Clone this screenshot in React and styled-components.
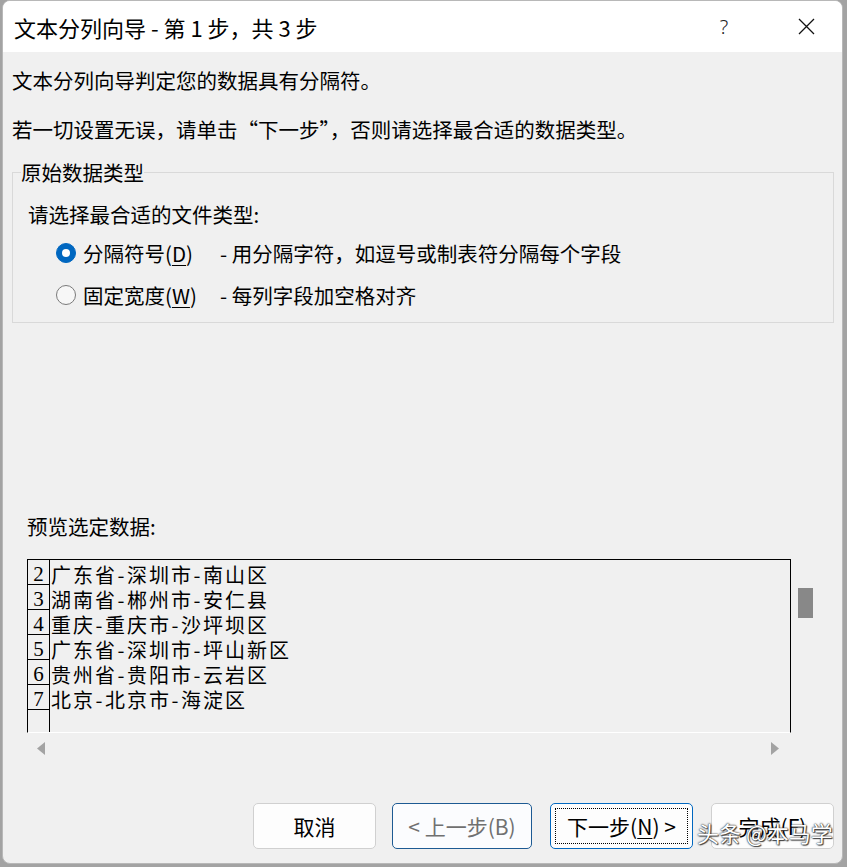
import React from "react";
import styled, { createGlobalStyle } from "styled-components";

const Global = createGlobalStyle`
  html, body { margin: 0; padding: 0; background: #a3a3a3; }
  body { font-family: "Noto Sans CJK SC", "Noto Sans", sans-serif; color: #000; }
  * { box-sizing: border-box; }
`;

const Window = styled.div`
  position: relative;
  margin-left: 2px;
  width: 841px;
  height: 864px;
  border: 1px solid #b8b8b8;
  border-radius: 8px;
  overflow: hidden;
  background: #f0f0f0;
  display: flex;
  flex-direction: column;
`;

const TitleBar = styled.div`
  flex: none;
  height: 51px;
  background: #fff;
  display: flex;
  align-items: center;
  padding: 0 3px 0 11px;
`;

const TitleText = styled.div`
  flex: 1;
  font-size: 22px;
  line-height: 30px;
`;

const CaptionButton = styled.div`
  width: ${(p) => p.$w || 66}px;
  height: 51px;
  display: flex;
  align-items: center;
  justify-content: center;
  font-family: "Noto Sans", sans-serif;
  font-size: 20px;
  font-weight: 300;
  color: #222;
`;

const Body = styled.div`
  flex: 1;
  display: flex;
  flex-direction: column;
  padding: 14px 8px 14px 9px;
`;

const Para = styled.p`
  margin: ${(p) => p.$mt || 0}px 0 0 0;
  font-size: 20.5px;
  line-height: 28px;
`;

const GroupBox = styled.fieldset`
  margin: 16px 0 0 0;
  padding: 0 8px 6px 8px;
  border: 1px solid #d9d9d9;
  min-width: 0;
`;

const GroupLegend = styled.legend`
  padding: 0;
  font-size: 20.5px;
  line-height: 26px;
`;

const GroupLabel = styled.div`
  margin-top: 15px;
  padding-left: 7px;
  font-size: 20.5px;
  line-height: 28px;
`;

const RadioList = styled.div`
  margin-top: 4px;
  padding-left: 35px;
`;

const RadioRow = styled.div`
  height: 42px;
  display: grid;
  grid-template-columns: 20px 130px auto;
  column-gap: 7px;
  align-items: center;
  font-size: 20.5px;
  line-height: 28px;
`;

const RadioDot = styled.span`
  width: 20px;
  height: 20px;
  border-radius: 50%;
  display: flex;
  align-items: center;
  justify-content: center;
  background: ${(p) => (p.$checked ? "#0067c0" : "#f7f7f7")};
  border: 1px solid ${(p) => (p.$checked ? "#0067c0" : "#7a7a7a")};
  &::after {
    content: "";
    display: ${(p) => (p.$checked ? "block" : "none")};
    width: 8px;
    height: 8px;
    border-radius: 50%;
    background: #fff;
  }
`;

const U = styled.span`
  text-decoration: underline;
  text-underline-offset: 3px;
  text-decoration-thickness: 1px;
`;

const PreviewLabel = styled.div`
  margin: 189px 0 0 15px;
  font-size: 20.5px;
  line-height: 28px;
`;

const PreviewFrame = styled.div`
  margin: 19px 0 0 15px;
  display: grid;
  grid-template-columns: 764px 30px;
  grid-template-rows: 174px 30px;
`;

const PreviewBox = styled.div`
  border: 1px solid #000;
  border-bottom-color: #fff;
  overflow: hidden;
`;

const DataRow = styled.div`
  display: flex;
  height: 25px;
`;

const NumCell = styled.div`
  flex: none;
  width: 22px;
  height: 25px;
  padding-top: 4px;
  border-right: 1px solid #000;
  border-bottom: 1px solid #000;
  font-family: "Liberation Serif", serif;
  font-size: 21px;
  line-height: 20px;
  text-align: center;
`;

const DataText = styled.div`
  height: 25px;
  padding: 4px 0 0 1px;
  font-family: "Noto Sans CJK SC", sans-serif;
  font-size: 20px;
  letter-spacing: 2px;
  line-height: 21px;
  white-space: nowrap;
`;

const Dash = styled.span`
  display: inline-block;
  width: 10px;
  margin-left: -1px;
  margin-right: 1px;
  letter-spacing: 0;
  text-align: center;
`;

const VScroll = styled.div`
  padding: 29px 0 0 7px;
`;

const Thumb = styled.div`
  width: 15px;
  height: 30px;
  background: #888;
`;

const HScroll = styled.div`
  display: flex;
  align-items: center;
  justify-content: space-between;
  padding: 0 12px 0 10px;
`;

const Arrow = styled.svg`
  width: 8px;
  height: 13px;
  display: block;
`;

const ButtonRow = styled.div`
  margin-top: auto;
  display: flex;
  justify-content: flex-end;
`;

const DialogButton = styled.div`
  position: relative;
  width: ${(p) => p.$w}px;
  height: 46px;
  margin-left: ${(p) => p.$ml || 0}px;
  display: flex;
  align-items: center;
  justify-content: center;
  border-radius: 5px;
  font-size: 21px;
  line-height: 28px;
  background: ${(p) => (p.$variant === "prev" ? "#fbfcfe" : "#fdfdfd")};
  color: ${(p) => (p.$variant === "prev" ? "#707070" : "#000")};
  border: 1px solid
    ${(p) =>
      p.$variant === "prev" ? "#1d5a93" : p.$variant === "next" ? "#0067c0" : "#d0d0d0"};
  ${(p) =>
    p.$variant === "next" &&
    `&::after {
      content: "";
      position: absolute;
      inset: 4px;
      border: 1px dotted #000;
    }`}
`;

const Watermark = styled.div`
  position: absolute;
  left: 694px;
  top: 816px;
  font-size: 22px;
  line-height: 30px;
  color: #fff;
  text-shadow: 0 0 2px #333, 0 0 1px #333, 1px 1px 1px #444;
  white-space: nowrap;
`;

const rows = [
  ["2", "广东省-深圳市-南山区"],
  ["3", "湖南省-郴州市-安仁县"],
  ["4", "重庆-重庆市-沙坪坝区"],
  ["5", "广东省-深圳市-坪山新区"],
  ["6", "贵州省-贵阳市-云岩区"],
  ["7", "北京-北京市-海淀区"],
  ["", ""],
];

function renderLine(text) {
  const parts = text.split("-");
  return parts.map((part, i) => (
    <React.Fragment key={i}>
      {i > 0 && <Dash>-</Dash>}
      {part}
    </React.Fragment>
  ));
}

export default function App() {
  return (
    <>
      <Global />
      <Window>
        <TitleBar>
          <TitleText>文本分列向导 - 第 1 步，共 3 步</TitleText>
          <CaptionButton $w={98}>?</CaptionButton>
          <CaptionButton $w={66}>
            <svg width="17" height="17" viewBox="0 0 17 17">
              <path d="M1 1L16 16M16 1L1 16" stroke="#111" strokeWidth="1.3" fill="none" />
            </svg>
          </CaptionButton>
        </TitleBar>
        <Body>
          <Para>文本分列向导判定您的数据具有分隔符。</Para>
          <Para $mt={21}>若一切设置无误，请单击“下一步”，否则请选择最合适的数据类型。</Para>
          <GroupBox>
            <GroupLegend>原始数据类型</GroupLegend>
            <GroupLabel>请选择最合适的文件类型:</GroupLabel>
            <RadioList>
              <RadioRow>
                <RadioDot $checked />
                <span>
                  分隔符号(<U>D</U>)
                </span>
                <span>- 用分隔字符，如逗号或制表符分隔每个字段</span>
              </RadioRow>
              <RadioRow>
                <RadioDot />
                <span>
                  固定宽度(<U>W</U>)
                </span>
                <span>- 每列字段加空格对齐</span>
              </RadioRow>
            </RadioList>
          </GroupBox>
          <PreviewLabel>预览选定数据:</PreviewLabel>
          <PreviewFrame>
            <PreviewBox>
              {rows.map(([n, t], i) => (
                <DataRow key={i}>
                  <NumCell>{n}</NumCell>
                  <DataText>{renderLine(t)}</DataText>
                </DataRow>
              ))}
            </PreviewBox>
            <VScroll>
              <Thumb />
            </VScroll>
            <HScroll>
              <Arrow viewBox="0 0 8 13">
                <path d="M8 0L0 6.5L8 13Z" fill="#a3a3a3" />
              </Arrow>
              <Arrow viewBox="0 0 8 13">
                <path d="M0 0L8 6.5L0 13Z" fill="#a3a3a3" />
              </Arrow>
            </HScroll>
            <div />
          </PreviewFrame>
          <ButtonRow>
            <DialogButton $w={123}>取消</DialogButton>
            <DialogButton $w={140} $ml={16} $variant="prev">
              &lt; 上一步(B)
            </DialogButton>
            <DialogButton $w={143} $ml={18} $variant="next">
              下一步(<U>N</U>) &gt;
            </DialogButton>
            <DialogButton $w={123} $ml={18}>
              完成(F)
            </DialogButton>
          </ButtonRow>
        </Body>
        <Watermark>头条 @本马学</Watermark>
      </Window>
    </>
  );
}
